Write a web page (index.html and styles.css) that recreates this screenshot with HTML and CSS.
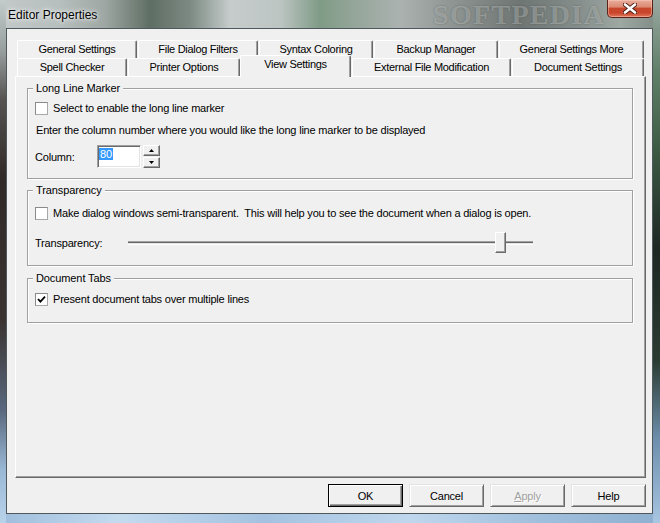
FILE: index.html
```html
<!DOCTYPE html>
<html>
<head>
<meta charset="utf-8">
<link rel="stylesheet" href="styles.css">
</head>
<body>
<div class="window">
  <div class="titlebar">
    <span class="title">Editor Properties</span>
    <span class="wm-title">SOFTPEDIA</span>
    <div class="close">
      <svg width="14" height="11" viewBox="0 0 14 11">
        <path d="M2 1.5 L12 9.5 M12 1.5 L2 9.5" stroke="#4a1c14" stroke-width="4.4" stroke-linecap="round"/>
        <path d="M2 1.5 L12 9.5 M12 1.5 L2 9.5" stroke="#ffffff" stroke-width="2.6" stroke-linecap="round"/>
      </svg>
    </div>
  </div>
  <div class="client">
    <div class="tabctl">
      <div class="tabrow">
        <div class="tab t11">General Settings</div>
        <div class="tab t12">File Dialog Filters</div>
        <div class="tab t13">Syntax Coloring</div>
        <div class="tab t14">Backup Manager</div>
        <div class="tab t15">General Settings More</div>
      </div>
      <div class="tabrow">
        <div class="tab t21">Spell Checker</div>
        <div class="tab t22">Printer Options</div>
        <div class="tab t23 active">View Settings</div>
        <div class="tab t24">External File Modification</div>
        <div class="tab t25">Document Settings</div>
      </div>
      <div class="panel">
        <div class="group g1">
          <div class="gtitle">Long Line Marker</div>
          <div class="check c1"><span class="box"></span><span>Select to enable the long line marker</span></div>
          <div class="line">Enter the column number where you would like the long line marker to be displayed</div>
          <div class="colrow">
            <span class="lbl">Column:</span>
            <div class="edit"><span class="sel">80</span></div>
            <div class="spin">
              <div class="sbtn"><svg width="5" height="3" viewBox="0 0 5 3"><polygon points="0,3 5,3 2.5,0" fill="#000"/></svg></div>
              <div class="sbtn"><svg width="5" height="3" viewBox="0 0 5 3"><polygon points="0,0 5,0 2.5,3" fill="#000"/></svg></div>
            </div>
          </div>
        </div>
        <div class="group g2">
          <div class="gtitle">Transparency</div>
          <div class="check c2"><span class="box"></span><span>Make dialog windows semi-transparent.&nbsp; This will help you to see the document when a dialog is open.</span></div>
          <div class="sliderrow">
            <span class="slbl">Transparency:</span>
            <div class="slider">
              <div class="track"></div>
              <div class="thumb"></div>
            </div>
          </div>
        </div>
        <div class="group g3">
          <div class="gtitle">Document Tabs</div>
          <div class="check c3"><span class="box"><svg width="9" height="9" viewBox="0 0 9 9"><path d="M1 4 L3.4 6.6 L8 1.6" fill="none" stroke="#000" stroke-width="1.8"/></svg></span><span>Present document tabs over multiple lines</span></div>
        </div>
      </div>
    </div>
    <div class="footer">
      <div class="btn default">OK</div>
      <div class="btn">Cancel</div>
      <div class="btn disabled"><span><u>A</u>pply</span></div>
      <div class="btn">Help</div>
    </div>
  </div>
</div>
</body>
</html>
```
FILE: styles.css
```css
* { box-sizing: border-box; margin: 0; padding: 0; }

html, body {
  width: 660px;
  height: 523px;
  overflow: hidden;
}

body {
  font-family: "Liberation Sans", Arial, sans-serif;
  font-size: 11px;
  color: #000;
  background: #6d7572;
}

.window {
  position: relative;
  width: 660px;
  height: 523px;
  display: flex;
  flex-direction: column;
  background:
    linear-gradient(to bottom, #c3cbcb 0px, #98a09f 50px, #555251 100px, #2f2927 180px, #3a3230 320px, #59687e 410px, #9ab8d6 470px, #b9d3ea 523px) left top / 6px 100% no-repeat,
    linear-gradient(to bottom, #9aa8a2 0px, #61806a 70px, #3c5a44 150px, #1d2724 250px, #2a3b31 360px, #6e8fad 440px, #a9c6e2 523px) right top / 7px 100% no-repeat,
    linear-gradient(to right, #9fbedc 0%, #c4dbef 18%, #a4c2e0 40%, #bfd7ed 62%, #a0bfdc 82%, #8fb0d0 100%) left bottom / 100% 9px no-repeat,
    linear-gradient(to right, #c2c9c8 0px, #b7bfbe 60px, #9ea7a3 105px, #5f6e64 150px, #7c8a83 190px, #c5cccb 230px, #bdc5c3 280px, #7f9b86 320px, #92a497 350px, #abb2b0 400px, #8f9694 450px, #6e7573 520px, #868f8c 580px, #9ea8a3 620px, #7d8a82 660px);
}

/* ---------- title bar ---------- */
.titlebar {
  height: 28px;
  flex: none;
  display: flex;
  align-items: flex-start;
}

.title {
  margin: 8px 0 0 8px;
  font-size: 12px;
  line-height: 14px;
  color: #000;
  text-shadow: 0 0 6px rgba(255,255,255,0.95), 0 0 3px rgba(255,255,255,0.9);
}

.wm-title {
  margin: 2px 0 0 auto;
  font-family: "Liberation Serif", "Times New Roman", serif;
  font-weight: bold;
  font-size: 28px;
  line-height: 26px;
  letter-spacing: 1.3px;
  color: rgba(255,255,255,0.28);
  text-shadow: 0 0 2px rgba(40,50,45,0.35);
}

.close {
  margin: 0 7px 0 2px;
  width: 46px;
  height: 18px;
  border: 1px solid #5a2219;
  border-top: none;
  border-radius: 0 0 5px 5px;
  background: linear-gradient(to bottom, #e9ad9d 0%, #dc8a74 40%, #c7472d 50%, #c9452b 75%, #e0785c 100%);
  box-shadow: inset 0 0 0 1px rgba(255,210,195,0.45);
  display: flex;
  align-items: center;
  justify-content: center;
}

.close svg { display: block; }

/* ---------- client area ---------- */
.client {
  flex: 1;
  margin: 0 7px 9px 6px;
  border: 1px solid #4f585b;
  background: #f0f0f0;
  display: flex;
  flex-direction: column;
}

.tabctl {
  flex: 1;
  margin: 11px 6px 0 8px;
  display: flex;
  flex-direction: column;
}

.tabrow {
  display: flex;
  height: 18px;
  padding-left: 2px;
  align-items: flex-start;
}

.tab {
  height: 18px;
  border: 1px solid #fff;
  border-right-color: #696969;
  border-bottom: none;
  border-radius: 2px 2px 0 0;
  box-shadow: inset -1px 0 0 #a0a0a0;
  background: #f0f0f0;
  text-align: center;
  line-height: 16px;
  white-space: nowrap;
  letter-spacing: -0.3px;
}

.t11 { width: 120px; margin-right: 1px; }
.t12 { width: 120px; margin-right: 1px; }
.t13 { width: 114px; margin-right: 1px; }
.t14 { width: 124px; margin-right: 1px; }
.t15 { width: 145px; }

.t21 { width: 110px; margin-right: 1px; }
.t22 { width: 112px; }
.t23 { width: 111px; margin-right: 1px; }
.t24 { width: 159px; margin-right: 1px; }
.t25 { width: 132px; }

.tab.active {
  position: relative;
  z-index: 2;
  margin-top: -3px;
  height: 22px;
}

.panel {
  flex: 1;
  border-top: 1px solid #fff;
  border-left: 1px solid #fff;
  border-right: 1px solid #696969;
  border-bottom: 1px solid #696969;
  box-shadow: inset -1px -1px 0 #a0a0a0;
  padding: 11px 12px 0 11px;
}

/* ---------- group boxes ---------- */
.group {
  border: 1px solid #a0a0a0;
  box-shadow: 1px 1px 0 #fff, inset 1px 1px 0 #fff;
  padding: 0 8px 0 7px;
}

.g1 { padding-bottom: 10px; }
.g2 { margin-top: 11px; padding-bottom: 12px; }
.g3 { margin-top: 12px; padding-bottom: 16px; }

.gtitle {
  width: fit-content;
  margin: -8px 0 0 -2px;
  padding: 0 3px;
  height: 14px;
  line-height: 14px;
  background: #f0f0f0;
  letter-spacing: -0.1px;
}

.check {
  display: flex;
  align-items: center;
  height: 13px;
  gap: 5px;
  line-height: 13px;
  white-space: nowrap;
  letter-spacing: -0.2px;
}

.c1 { margin-top: 7px; }
.c2 { margin-top: 10px; }
.c3 { margin-top: 8px; }

.box {
  width: 13px;
  height: 13px;
  flex: none;
  border: 1px solid #8a8a8a;
  border-right-color: #a8a8a8;
  border-bottom-color: #a8a8a8;
  background: #fff;
  display: flex;
  align-items: center;
  justify-content: center;
}

.box svg { display: block; }

.line {
  margin: 8px 0 0 1px;
  line-height: 14px;
  white-space: nowrap;
  letter-spacing: -0.2px;
}

.colrow {
  margin-top: 8px;
  height: 23px;
  display: flex;
  align-items: center;
}

.lbl {
  width: 62px;
  letter-spacing: -0.2px;
}

.edit {
  width: 44px;
  height: 23px;
  border: 1px solid #a0a0a0;
  border-right-color: #fff;
  border-bottom-color: #fff;
  box-shadow: inset 1px 1px 0 #696969, inset -1px -1px 0 #e3e3e3;
  background: #fff;
  padding: 2px 0 0 1px;
}

.sel {
  display: inline-block;
  background: #3399ff;
  color: #fff;
  line-height: 12px;
  padding: 0 1px 0 1px;
}

.spin {
  margin-left: 2px;
  width: 17px;
  height: 23px;
  display: flex;
  flex-direction: column;
  gap: 1px;
}

.sbtn {
  height: 11px;
  border: 1px solid #fff;
  border-right-color: #696969;
  border-bottom-color: #696969;
  box-shadow: inset -1px -1px 0 #a0a0a0;
  background: #f0f0f0;
  display: flex;
  align-items: center;
  justify-content: center;
}

.sbtn svg { display: block; }

.sliderrow {
  margin-top: 12px;
  height: 21px;
  display: flex;
  align-items: center;
}

.slbl {
  width: 93px;
  letter-spacing: -0.2px;
}

.slider {
  position: relative;
  width: 405px;
  height: 21px;
  display: flex;
  align-items: center;
}

.track {
  flex: 1;
  height: 4px;
  border-top: 1px solid #a0a0a0;
  border-bottom: 1px solid #fff;
  background: linear-gradient(to bottom, #696969 50%, #e3e3e3 50%);
}

.thumb {
  position: absolute;
  left: 367px;
  top: 0;
  width: 11px;
  height: 21px;
  border: 1px solid #fff;
  border-right-color: #696969;
  border-bottom-color: #696969;
  box-shadow: inset -1px -1px 0 #a0a0a0;
  background: #f0f0f0;
}

/* ---------- buttons ---------- */
.footer {
  flex: none;
  display: flex;
  justify-content: flex-end;
  gap: 6px;
  padding: 6px 6px 6px 0;
}

.btn {
  width: 75px;
  height: 23px;
  border: 1px solid #e3e3e3;
  border-right-color: #696969;
  border-bottom-color: #696969;
  box-shadow: inset 1px 1px 0 #fff, inset -1px -1px 0 #a0a0a0;
  background: #f0f0f0;
  display: flex;
  align-items: center;
  justify-content: center;
  letter-spacing: -0.2px;
}

.btn.default {
  border: 1px solid #000;
  box-shadow: inset 1px 1px 0 #fff, inset -1px -1px 0 #696969, inset -2px -2px 0 #a0a0a0;
}

.btn.disabled {
  color: #a0a0a0;
  text-shadow: 1px 1px 0 #fff;
}
```
